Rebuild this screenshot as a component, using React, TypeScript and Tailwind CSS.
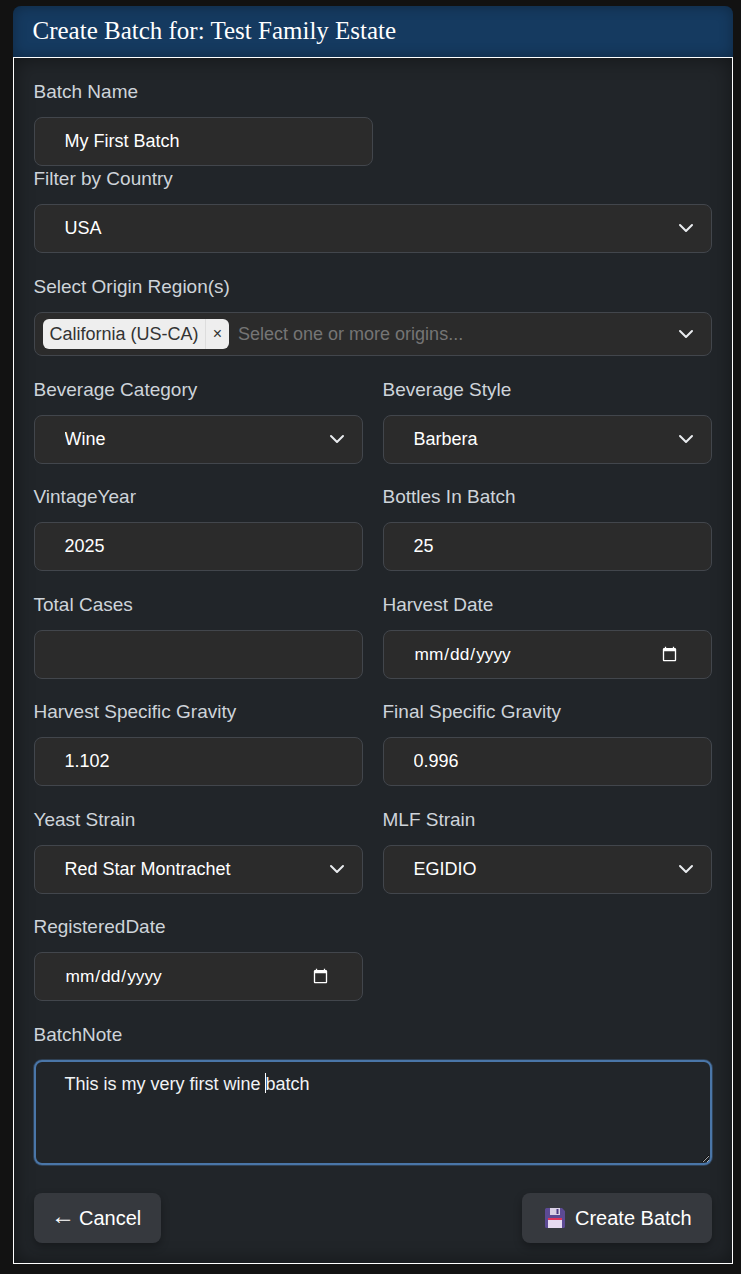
import React from "react";

const inputBase =
  "block w-full h-[49px] rounded-lg border border-[#42464c] bg-[#2b2b2b] pl-[29.5px] pr-3 leading-[27px] text-white outline-none";
const inputCls = inputBase + " text-[18px]";

function Label({ children }: { children: React.ReactNode }) {
  return <label className="block h-[27px] mb-2 -ml-[0.5px] text-[19px] leading-[20px] text-[#ced4da]">{children}</label>;
}

function Chevron() {
  return (
    <svg viewBox="0 0 16 16" className="w-4 h-4 fill-none stroke-[#e9ecef]" strokeWidth="2" strokeLinecap="round" strokeLinejoin="round">
      <path d="m2 5 6 6 6-6" />
    </svg>
  );
}

function SelectBox({ value }: { value: string }) {
  return (
    <div className="relative">
      <select className={inputCls + " appearance-none"} defaultValue={value}>
        <option>{value}</option>
      </select>
      <span className="absolute right-[18px] top-4 pointer-events-none"><Chevron /></span>
    </div>
  );
}

function Text({ value }: { value: string }) {
  return <input className={inputCls} defaultValue={value} />;
}

function DateBox() {
  return <input type="date" className={inputBase + " text-[17.3px] [color-scheme:dark] pr-[31px]"} />;
}

function Floppy() {
  return (
    <svg viewBox="0 0 20 20" className="w-5 h-5 shrink-0">
      <path d="M1.5 0H17l3 3v15.5a1.5 1.5 0 0 1-1.5 1.5h-17A1.5 1.5 0 0 1 0 18.5v-17A1.5 1.5 0 0 1 1.5 0z" fill="#5c4a94" />
      <path d="M5 0h10v7H5z" fill="#d9d0e6" />
      <path d="M11.5 1h2v5h-2z" fill="#4a3a80" />
      <path d="M3 10h14v10H3z" fill="#e6daf0" />
      <path d="M3 10h14v2H3z" fill="#e0345c" />
    </svg>
  );
}

function Row({ children }: { children: React.ReactNode }) {
  return <div className="grid grid-cols-2 gap-x-5 mb-[23.5px]">{children}</div>;
}

export default function App() {
  return (
    <div className="min-h-[1274px] bg-[#121212] pt-1.5 pl-[13px] pr-2 pb-[10px] [font-family:'Liberation_Sans',Arial,sans-serif]">
      <div className="h-[51px] rounded-t-lg bg-[#153a60] pl-5 flex items-center shadow-[inset_0_0_14px_rgba(0,0,0,0.3)]">
        <h1 className="[font-family:'Liberation_Serif','Times_New_Roman',serif] text-[25px] font-normal text-white leading-[50px] -mt-0.5 -ml-[0.5px]">
          Create Batch for: Test Family Estate
        </h1>
      </div>
      <div className="h-[1207px] border border-white bg-[#212529] pt-6 px-5 shadow-[inset_0_0_20px_rgba(0,0,0,0.45)]">
        <Label>Batch Name</Label>
        <div className="w-[339px] mb-[3px]">
          <Text value="My First Batch" />
        </div>

        <Label>Filter by Country</Label>
        <div className="mb-6">
          <SelectBox value="USA" />
        </div>

        <Label>Select Origin Region(s)</Label>
        <div className="relative h-11 mb-[23.75px] rounded-lg border border-[#42464c] bg-[#2b2b2b] flex items-center pl-2 text-[18px]">
          <div className="h-[30px] flex items-center rounded-md bg-[#eeeeee] text-[#333333]">
            <span className="pl-[6.5px] pr-[6.5px] leading-[27px]">California (US-CA)</span>
            <span className="h-full w-6 border-l border-[#dddddd] flex items-center justify-center text-[16px]">×</span>
          </div>
          <span className="ml-[9px] text-[#757575]">Select one or more origins...</span>
          <span className="absolute right-[17px] top-[13px]"><Chevron /></span>
        </div>

        <Row>
          <div><Label>Beverage Category</Label><SelectBox value="Wine" /></div>
          <div><Label>Beverage Style</Label><SelectBox value="Barbera" /></div>
        </Row>
        <Row>
          <div><Label>VintageYear</Label><Text value="2025" /></div>
          <div><Label>Bottles In Batch</Label><Text value="25" /></div>
        </Row>
        <Row>
          <div><Label>Total Cases</Label><Text value="" /></div>
          <div><Label>Harvest Date</Label><DateBox /></div>
        </Row>
        <Row>
          <div><Label>Harvest Specific Gravity</Label><Text value="1.102" /></div>
          <div><Label>Final Specific Gravity</Label><Text value="0.996" /></div>
        </Row>
        <Row>
          <div><Label>Yeast Strain</Label><SelectBox value="Red Star Montrachet" /></div>
          <div><Label>MLF Strain</Label><SelectBox value="EGIDIO" /></div>
        </Row>
        <Row>
          <div><Label>RegisteredDate</Label><DateBox /></div>
          <div />
        </Row>

        <Label>BatchNote</Label>
        <div className="relative">
          <textarea
            className="block w-full h-[105px] rounded-lg border-2 border-[#4a76a8] bg-[#212529] pl-[28.5px] pr-3 pt-[9px] text-[18px] leading-[27px] text-[#f1f3f5] outline-none shadow-[0_0_0_1px_rgba(74,118,168,0.35)]"
            defaultValue="This is my very first wine batch"
          />
          <span className="absolute left-[231px] top-[13px] h-5 w-px bg-white pointer-events-none" />
        </div>

        <div className="mt-[28.5px] flex justify-between">
          <button className="h-[50px] w-[127px] rounded-lg bg-[#36393e] pl-[17px] text-[20px] text-white shadow-[0_4px_8px_rgba(0,0,0,0.3)] flex items-center gap-1">
            <span className="text-[24px] leading-none -translate-y-0.5">←</span>
            <span>Cancel</span>
          </button>
          <button className="h-[50px] w-[190px] rounded-lg bg-[#36393e] pl-[23px] text-[20px] text-white shadow-[0_4px_8px_rgba(0,0,0,0.3)] flex items-center gap-2.5">
            <Floppy />
            Create Batch
          </button>
        </div>
      </div>
    </div>
  );
}
